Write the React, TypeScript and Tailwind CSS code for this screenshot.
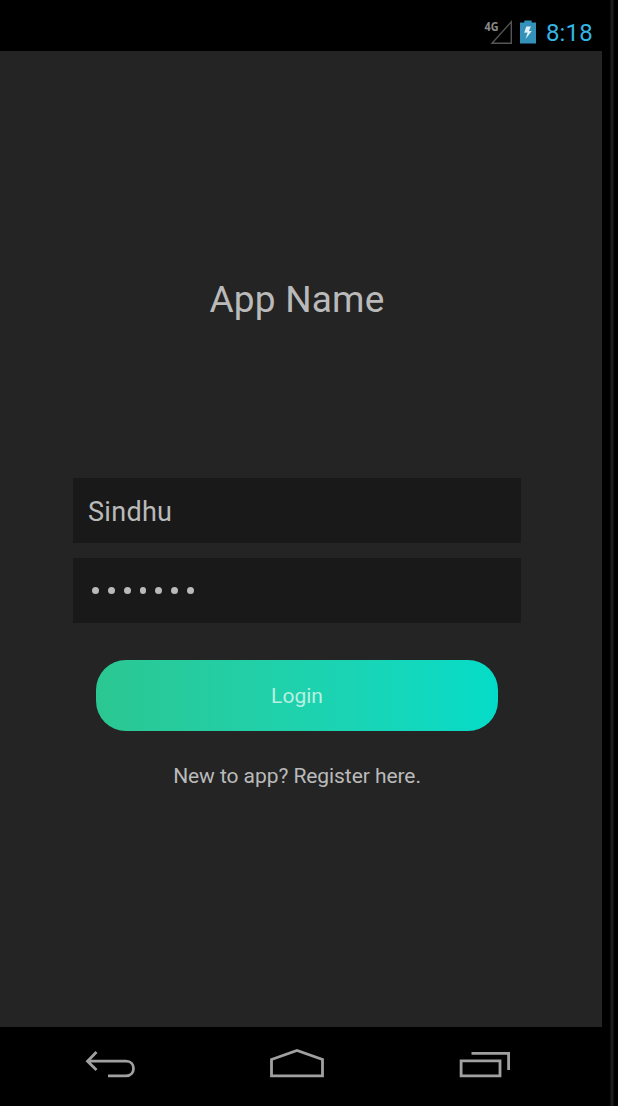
import React from "react";

function StatusBar() {
  return (
    <header className="flex h-[51px] shrink-0 items-start justify-end bg-black pr-[9px] pt-[18px]">
      <svg width="33" height="28" viewBox="-4 -2 33 28" className="mr-[7px] overflow-visible">
        <path d="M8 23.3H27.3V1.8Z" fill="none" stroke="#555555" strokeWidth="1.4" />
        <text x="0.5" y="11" fill="#8a8a8a" fontFamily="Open Sans" fontSize="13" fontWeight="700" textLength="14" lengthAdjust="spacingAndGlyphs">
          4G
        </text>
      </svg>
      <svg width="16" height="26" viewBox="0 -2 16 26" className="mr-[10px]">
        <path d="M0 2.5H4.3V0.5H11.7V2.5H16V23.5H0Z" fill="#3492ba" />
        <path d="M6.3 6.5 4.2 12.7 7.6 12.5 5.6 19 11.8 11 8.9 11.1 10.9 6.5Z" fill="#e3f1f6" />
      </svg>
      <span className="pt-[2px] text-[24px] leading-[26px] tracking-[0.2px] text-[#33b5e5]">8:18</span>
    </header>
  );
}

function Navigation() {
  return (
    <nav className="flex h-[79px] shrink-0 items-start bg-black pl-[84px] pt-5">
      <button aria-label="Back">
        <svg width="54" height="34" viewBox="84 1047 54 34" fill="none" stroke="#a0a0a0" strokeWidth="2.8">
          <path d="M96.5 1052 87.5 1061.2 96.5 1070M87.5 1061.2H126C136 1061.2 136 1075.8 126 1075.8H108" />
        </svg>
      </button>
      <button aria-label="Home" className="ml-[130px]">
        <svg width="58" height="34" viewBox="268 1047 58 34" fill="none" stroke="#a0a0a0" strokeWidth="2.8">
          <path d="M271.5 1059.5 297 1050.5 322.5 1059.5V1075.8H271.5Z" />
        </svg>
      </button>
      <button aria-label="Recent apps" className="ml-[131px]">
        <svg width="56" height="34" viewBox="457 1047 56 34" fill="none" stroke="#a0a0a0" strokeWidth="2.8">
          <path d="M461.1 1060.8H500V1075.8H461.1ZM471.5 1053.4H508.6V1070" />
        </svg>
      </button>
    </nav>
  );
}

export default function App() {
  return (
    <div className="flex h-[1106px] w-[618px] overflow-hidden bg-black font-['Roboto',sans-serif]">
      <div className="flex w-[602px] shrink-0 flex-col">
        <StatusBar />
        <main className="flex h-[976px] flex-col items-center bg-[#242424] pr-2">
          <h1 className="mt-[225px] text-[37px] leading-[48px] tracking-[0.2px] text-[#bababa]">App Name</h1>
          <form className="mt-[154px] flex w-[448px] flex-col items-center" onSubmit={(e) => e.preventDefault()}>
            <input
              aria-label="User name"
              defaultValue="Sindhu"
              className="h-[65px] w-full bg-[#191919] px-[15px] pt-[3px] text-[27px] tracking-[0.3px] text-[#bababa] outline-none"
            />
            <div className="mt-[15px] flex h-[65px] w-full items-center gap-[9px] bg-[#191919] pl-[19px]" aria-label="Password">
              {Array.from({ length: 7 }, (_, i) => (
                <span key={i} className="h-[7px] w-[6.85px] rounded-full bg-[#bababa]" />
              ))}
            </div>
            <button className="mt-[37px] h-[71px] w-[402px] rounded-[30px] bg-linear-to-r from-[#2bc792] to-[#04dcc8] pt-0.5 text-[21px] text-[#b9f0e0]">
              Login
            </button>
          </form>
          <a className="mt-[31px] text-[21px] leading-[28px] tracking-[-0.07px] text-[#bababa]">New to app? Register here.</a>
        </main>
        <Navigation />
      </div>
      <div className="ml-[6px] h-full w-2 shrink-0 bg-linear-to-r from-black via-[#242424] to-black" />
    </div>
  );
}
